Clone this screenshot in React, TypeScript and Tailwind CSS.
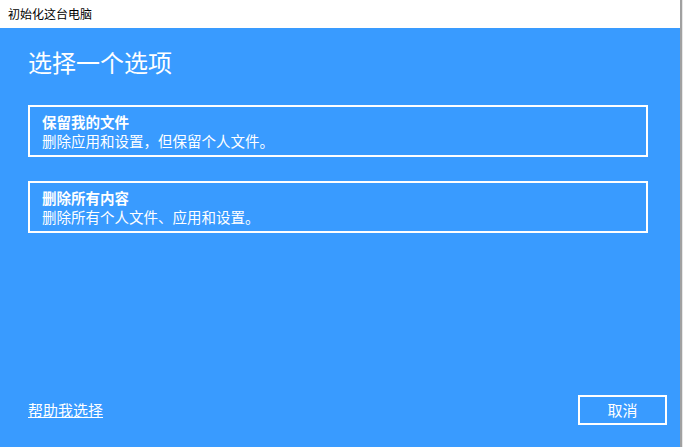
const font = "font-['Microsoft_YaHei','Noto_Sans_CJK_SC',sans-serif]";

const options = [
  { title: "保留我的文件", desc: "删除应用和设置，但保留个人文件。" },
  { title: "删除所有内容", desc: "删除所有个人文件、应用和设置。" },
];

export default function App() {
  return (
    <div className={`flex h-[447px] w-[683px] bg-white ${font}`}>
      <div className="flex h-full w-[680px] flex-col">
        {/* title bar */}
        <div className="flex h-[28px] items-center bg-white pl-[8px] text-[12px] text-black">
          初始化这台电脑
        </div>

        <div className="flex flex-1 flex-col bg-[#399bff] text-white">
          <h1 className="ml-[28px] mt-[18px] text-[24px] leading-[32px] font-normal">选择一个选项</h1>

          <div className="mt-[27px] flex flex-col gap-[24px] pl-[28px]">
            {options.map((o) => (
              <button
                key={o.title}
                className="flex w-[620px] flex-col border-2 border-white px-[12px] pt-[5px] pb-[5px] text-left"
              >
                <span className="text-[14.5px] leading-[19px] font-bold">{o.title}</span>
                <span className="text-[14.5px] leading-[19px]">{o.desc}</span>
              </button>
            ))}
          </div>

          <div className="mt-auto flex items-center justify-between pb-[22px] pl-[28px] pr-[13px]">
            <a href="#" className="text-[15px] leading-[18px] underline underline-offset-[1px]">
              帮助我选择
            </a>
            <button className="h-[30px] w-[89px] border-2 border-white text-[15px]">取消</button>
          </div>
        </div>
      </div>
      <div className="h-full w-[2px] bg-[#a0a0a0]" />
      <div className="h-full w-[1px] bg-[#e6e6e6]" />
    </div>
  );
}
